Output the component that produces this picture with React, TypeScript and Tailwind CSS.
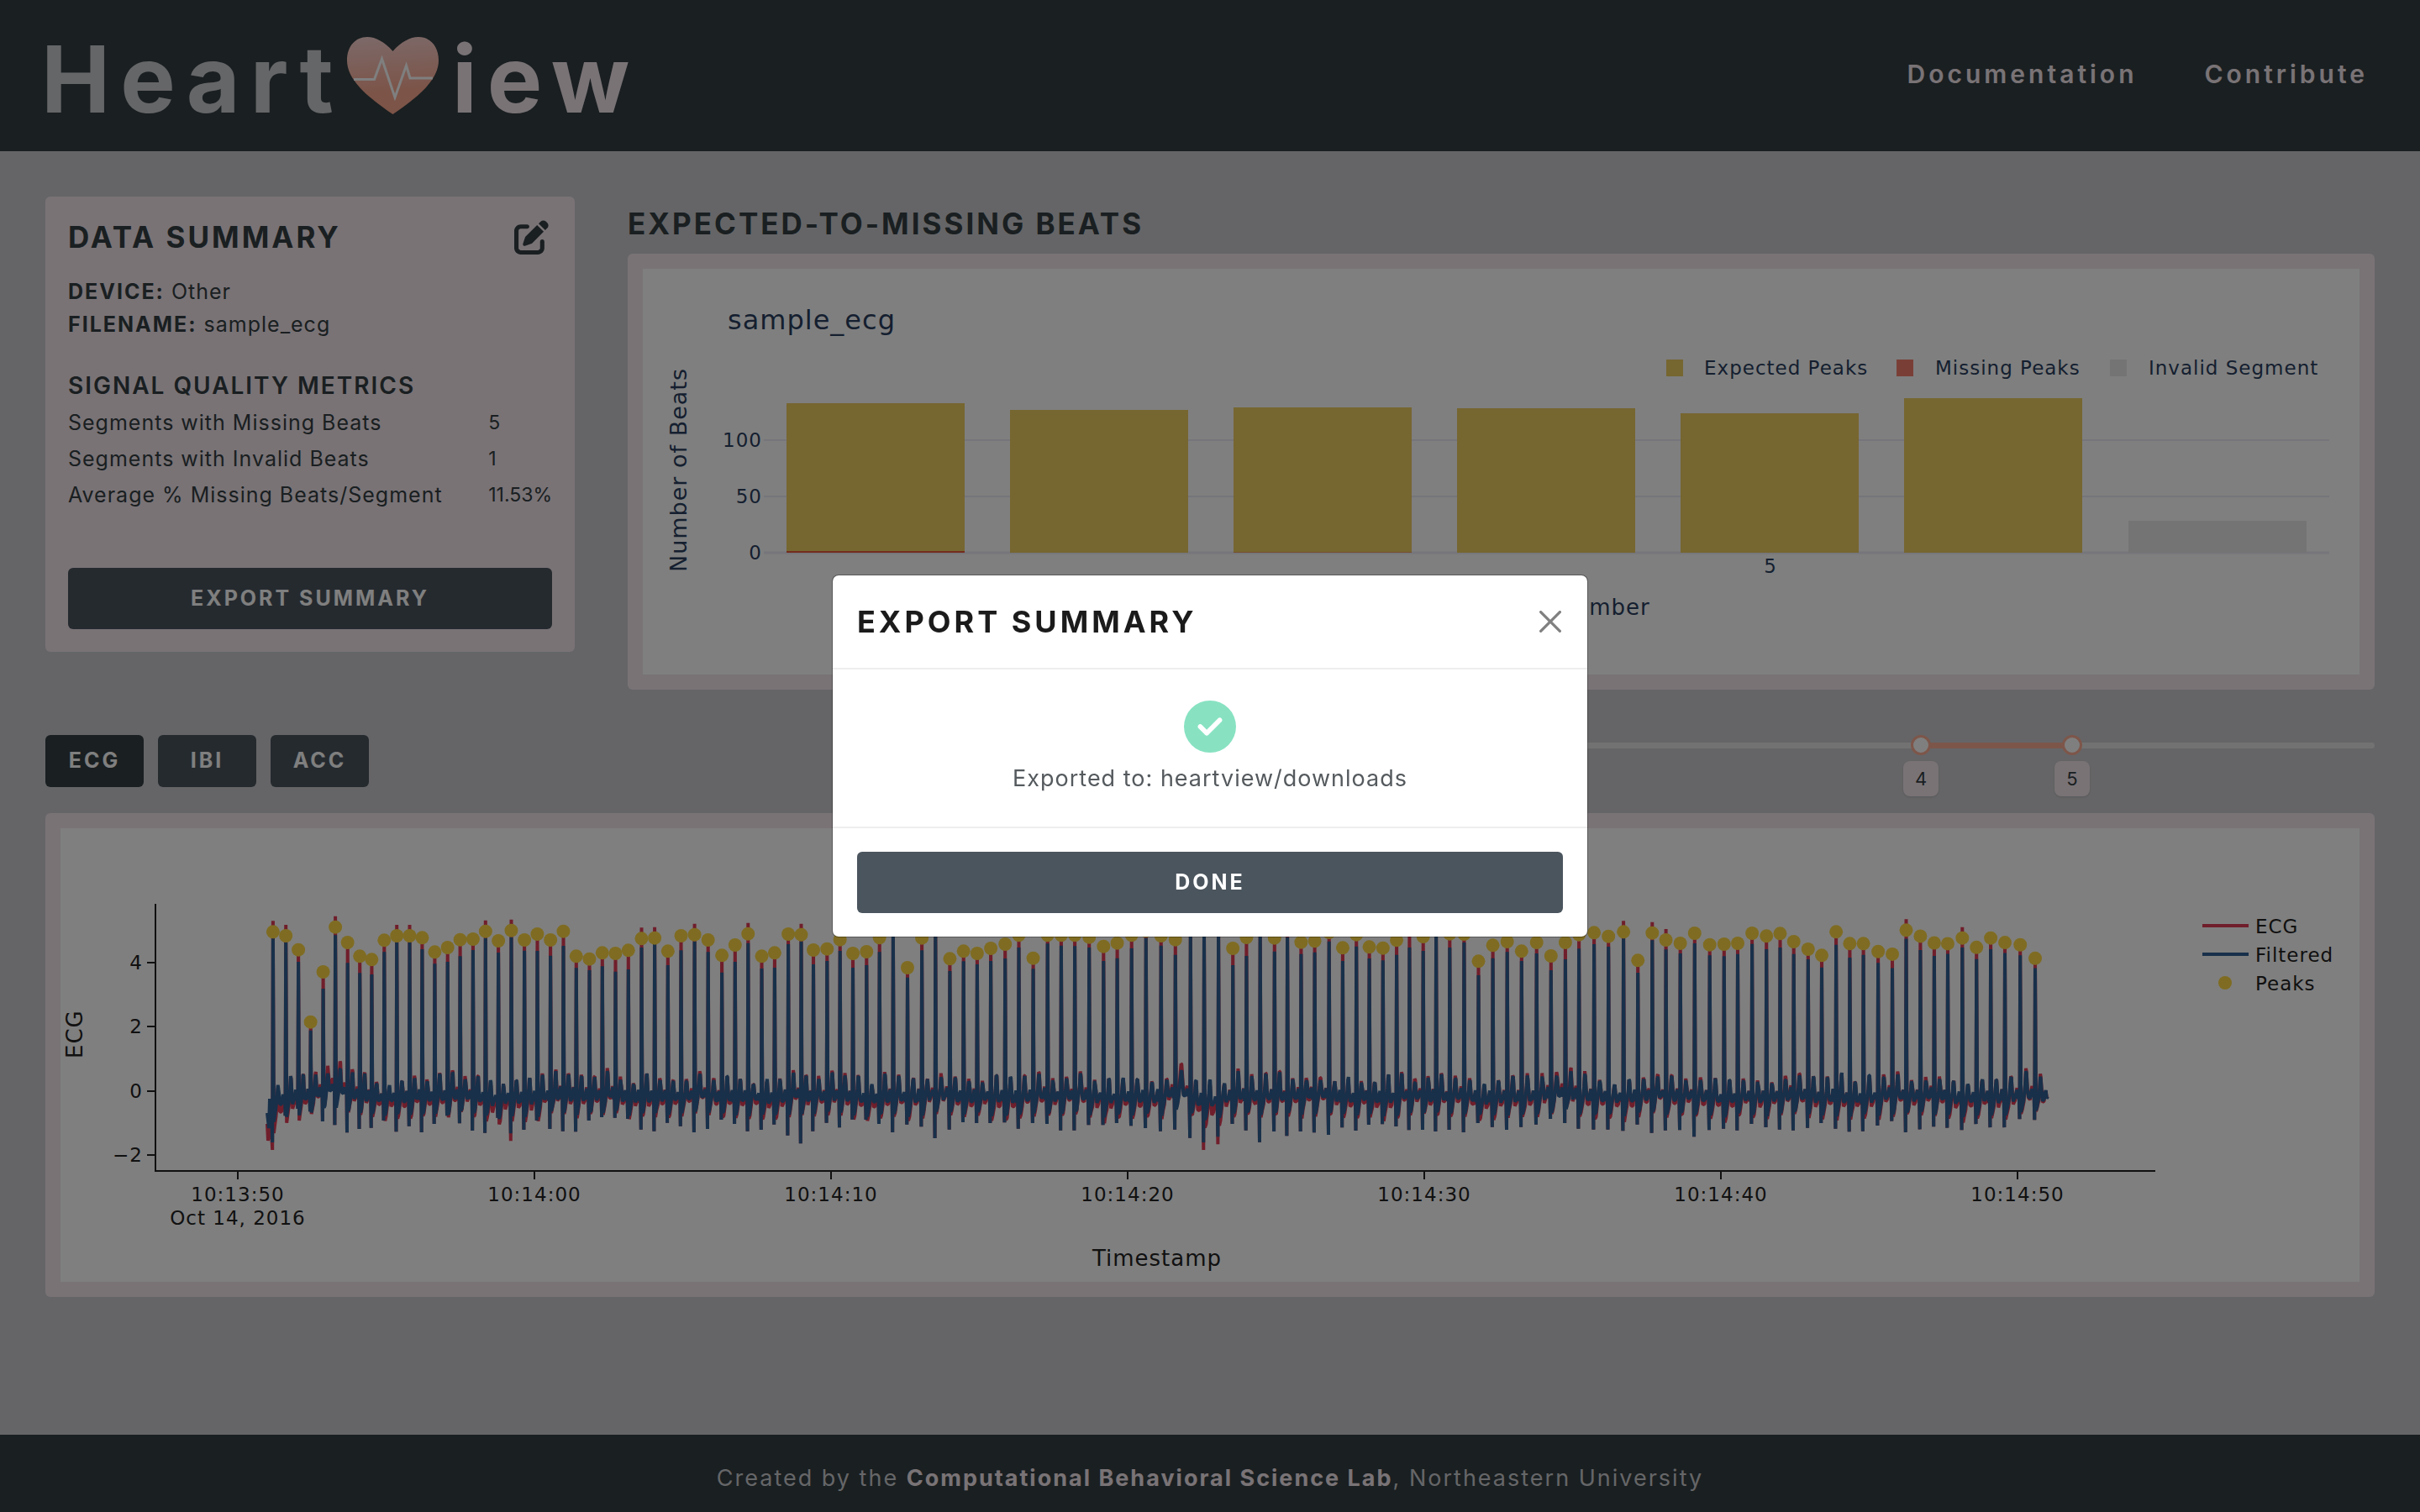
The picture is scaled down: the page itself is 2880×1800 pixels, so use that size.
import { FaCircleCheck, FaPenToSquare } from "react-icons/fa6";

/* ---------- Expected-to-missing chart ---------- */

const BAR_PITCH = 266;
const beatBars = [
  { top: 160, missing: 2 },
  { top: 168, missing: 0 },
  { top: 165, missing: 1 },
  { top: 166, missing: 0 },
  { top: 172, missing: 0 },
  { top: 154, missing: 0 },
];

const beatGrid = [
  { y: 204, label: "100" },
  { y: 271, label: "50" },
];

function BeatsChart() {
  return (
    <svg
      viewBox="0 0 2043 483"
      className="block h-auto w-full bg-white font-['DejaVu_Sans',sans-serif]"
      role="img"
      aria-label="Expected and missing beats per segment"
    >
      <g fill="#2a3f5f" fontSize="23" letterSpacing="1">
        <text x="101" y="72" fontSize="32">
          sample_ecg
        </text>
        <text x="-361" y="52" fontSize="27" transform="rotate(-90)">
          Number of Beats
        </text>
        <text x="955" y="412" fontSize="26">
          Segment Number
        </text>
        {beatGrid.map((g) => (
          <text key={g.label} x="142" y={g.y + 8} textAnchor="end">
            {g.label}
          </text>
        ))}
        <text x="142" y="346" textAnchor="end">0</text>
        <text x="1342" y="362" textAnchor="middle">5</text>
        <text x="1263" y="126">Expected Peaks</text>
        <text x="1538" y="126">Missing Peaks</text>
        <text x="1792" y="126">Invalid Segment</text>
      </g>
      <rect x="1218" y="108" width="20" height="20" fill="#eccd61" />
      <rect x="1492" y="108" width="20" height="20" fill="#f27e6c" />
      <rect x="1746" y="108" width="20" height="20" fill="#e8e8e8" />
      <g stroke="#ebeaf6">
        {beatGrid.map((g) => (
          <line key={g.label} x1="144" x2="2007" y1={g.y} y2={g.y} strokeWidth="2" />
        ))}
        <line x1="144" x2="2007" y1="338" y2="338" strokeWidth="3" />
      </g>
      {beatBars.map((bar, i) => (
        <g key={i}>
          <rect x={171 + i * BAR_PITCH} y={bar.top} width="212" height={338 - bar.top} fill="#eccd61" />
          {bar.missing > 0 && (
            <rect
              x={171 + i * BAR_PITCH}
              y={338 - bar.missing}
              width="212"
              height={bar.missing}
              fill={bar.missing > 1 ? "#e9583a" : "#eca05e"}
            />
          )}
        </g>
      ))}
      <rect x="1768" y="300" width="212" height="38" fill="#e8e8e8" />
    </svg>
  );
}

/* ---------- ECG signal ---------- */

type Beat = [x: number, dot: number, top: number, bottom: number];
type Window = { x0: number; y0: number; sx: number; sy: number; beats: Beat[] };

const windows: Window[] = [
  {
    x0: 300, y0: 1060, sx: 2.613, sy: 3,
    beats: [
      [65, 148, 172, 900], [105, 162, 186, 805], [144, 212, 255, 780], [182, 470, 500, 790], [221, 291, 351, 825],
      [259, 131, 160, 838], [297, 186, 259, 865], [335, 235, 295, 852], [372, 247, 300, 848], [411, 178, 220, 822],
      [450, 162, 186, 862], [490, 162, 186, 842], [529, 169, 210, 864], [568, 220, 262, 834], [608, 204, 255, 805],
      [647, 176, 235, 832], [687, 174, 213, 858], [726, 146, 170, 866], [766, 180, 222, 812], [806, 143, 167, 868],
      [847, 177, 215, 855], [887, 156, 216, 822], [928, 177, 233, 852], [968, 146, 198, 860], [1008, 235, 277, 862],
      [1049, 245, 285, 822], [1089, 223, 271, 810], [1130, 225, 290, 812], [1170, 214, 282, 816], [1211, 172, 204, 854],
      [1252, 170, 192, 860], [1293, 217, 267, 830], [1334, 162, 214, 842], [1376, 158, 182, 864], [1418, 177, 220, 852],
      [1461, 232, 293, 819], [1502, 195, 255, 834],
    ],
  },
  {
    x0: 880, y0: 1080, sx: 1.17, sy: 3,
    beats: [
      [12, 95, 128, 800], [31, 175, 219, 795], [49, 163, 216, 776], [68, 96, 132, 815], [86, 98, 122, 844],
      [103, 153, 204, 800], [122, 149, 192, 770], [140, 116, 156, 787], [158, 165, 216, 758], [177, 159, 207, 759],
      [195, 109, 160, 774], [214, 60, 100, 804], [234, 216, 251, 776], [254, 110, 154, 784], [273, 70, 100, 825],
      [293, 184, 228, 794], [312, 157, 193, 768], [331, 165, 204, 771], [350, 147, 192, 771], [370, 132, 183, 769],
      [389, 100, 144, 791], [409, 182, 220, 771], [429, 100, 130, 774], [448, 100, 137, 797], [467, 100, 139, 797],
      [487, 107, 144, 778], [507, 140, 192, 778], [526, 128, 182, 771], [546, 100, 147, 781], [566, 85, 110, 789],
      [587, 102, 137, 800], [607, 116, 170, 794], [628, 60, 100, 824], [647, 60, 100, 840], [667, 60, 100, 820],
      [687, 147, 207, 774], [706, 108, 174, 797], [725, 60, 100, 839], [745, 110, 158, 801], [763, 80, 108, 817],
      [782, 125, 167, 801], [801, 121, 161, 805], [821, 90, 122, 813], [840, 145, 192, 787], [859, 98, 140, 798],
      [877, 142, 183, 777], [896, 146, 190, 775], [915, 118, 170, 783], [933, 80, 144, 796], [952, 105, 156, 795],
      [970, 70, 104, 801], [989, 95, 144, 795], [1009, 96, 126, 804], [1029, 193, 243, 771], [1049, 136, 182, 785],
      [1069, 123, 160, 795], [1089, 157, 192, 785], [1110, 126, 165, 776], [1130, 174, 225, 756], [1150, 126, 186, 771],
      [1169, 98, 148, 791], [1190, 91, 132, 794], [1210, 104, 141, 794], [1231, 88, 112, 799], [1251, 190, 234, 776],
      [1271, 92, 118, 806], [1290, 117, 151, 797], [1310, 129, 165, 796], [1330, 93, 129, 820], [1351, 134, 172, 796],
      [1371, 132, 175, 791], [1390, 129, 167, 797], [1410, 93, 131, 774], [1430, 103, 150, 786], [1449, 94, 144, 794],
      [1468, 123, 167, 797], [1488, 150, 186, 788], [1507, 172, 215, 771], [1527, 88, 134, 791], [1546, 130, 180, 802],
      [1565, 130, 170, 800],
    ],
  },
  {
    x0: 2200, y0: 860, sx: 2.306, sy: 2.24,
    beats: [
      [81, 611, 641, 1075], [120, 618, 655, 1063], [158, 554, 577, 1093], [197, 570, 607, 1085], [235, 588, 623, 1078],
      [272, 590, 617, 1081], [312, 575, 600, 1087], [351, 600, 631, 1071], [390, 575, 605, 1080], [429, 587, 615, 1080],
      [471, 593, 621, 1058], [512, 629, 655, 1060],
    ],
  },
];

const beats = windows.flatMap((w) =>
  w.beats.map(([x, dot, top, bottom]) => ({
    x: w.x0 + x / w.sx,
    dot: w.y0 + dot / w.sy,
    top: w.y0 + top / w.sy,
    bottom: w.y0 + bottom / w.sy,
  })),
);

const bump = (x: number, center: number, width: number, height: number) =>
  height * Math.exp(-(((x - center) / width) ** 2));

// Slow wander of the raw signal's baseline.
const drift = (x: number) =>
  3 * Math.sin(x / 23) + 2 * Math.sin(x / 9) +
  bump(x, 322, 12, 20) + bump(x, 400, 18, -14) + bump(x, 590, 20, 5) + bump(x, 1406, 8, -12) +
  bump(x, 1440, 18, 14) + bump(x, 1480, 18, -6) + bump(x, 740, 25, -5) + bump(x, 1868, 16, -7);

const noise = (i: number, k: number) => {
  const v = Math.sin(i * 12.9898 + k * 78.233) * 43758.5453;
  return v - Math.floor(v) - 0.5;
};

function tracePath(raw: boolean) {
  const pts: [number, number][] = raw
    ? [[318, 1338], [319, 1358], [321, 1346], [322, 1328]]
    : [[318, 1325], [320, 1343], [321, 1308], [323, 1322]];
  beats.forEach((b, i) => {
    const next = beats[i + 1] ? beats[i + 1].x : b.x + 16;
    const gap = next - b.x;
    const n = (k: number) => noise(i, k);
    const y = (x: number, value: number, k: number) =>
      value + drift(x) * (raw ? 1 : 0.55) + n(k) * 5 + (raw ? n(k + 20) * 3 : 0);
    const sag = raw ? 4 : 0;
    const tWave = n(50) * 12;
    const spread = b.dot < 1125 && b.top - b.dot < 12 ? 9 : -2;
    const bottomExtra = raw && [0, 19, 70, 71].includes(i) ? 9 : 0;
    pts.push([b.x - 0.7, b.bottom + bottomExtra]);
    pts.push([b.x, raw ? b.dot - spread - 4 : b.top]);
    pts.push([b.x + 1, y(b.x, 1326 + sag, 1)]);
    const shape: [number, number][] = [
      [0.14, 1321 + sag], [0.24, 1310 + sag], [0.33, 1296 + tWave / 2], [0.38, 1284 + tWave - sag / 2],
      [0.42, 1284 + tWave], [0.48, 1299], [0.54, 1310 + sag], [0.66, 1308 + sag],
      [0.72, 1304], [0.79, 1298], [0.86, 1309], [0.92, 1305],
    ];
    shape.forEach(([t, v], k) => {
      const x = b.x + gap * t;
      pts.push([x, y(x, v, k + 2)]);
    });
  });
  return pts.map(([x, y], i) => `${i ? "L" : "M"}${x.toFixed(1)} ${y.toFixed(1)}`).join("");
}

const rawTrace = tracePath(true);
const filteredTrace = tracePath(false);

const yTicks = [
  { y: 1146, label: "4" },
  { y: 1222, label: "2" },
  { y: 1299, label: "0" },
  { y: 1375, label: "−2" },
];
const xTicks = ["10:13:50", "10:14:00", "10:14:10", "10:14:20", "10:14:30", "10:14:40", "10:14:50"];

function EcgChart() {
  return (
    <svg
      viewBox="72 986 2736 540"
      className="block h-auto w-full bg-white font-['DejaVu_Sans',sans-serif]"
      role="img"
      aria-label="ECG signal with detected peaks"
    >
      <g fill="none" strokeLinejoin="bevel">
        <path d={rawTrace} stroke="#e03c56" strokeWidth="4" />
        <path d={filteredTrace} stroke="#306094" strokeWidth="4" />
        <path d="M2621 1102H2676" stroke="#e03c56" strokeWidth="4" />
        <path d="M2621 1136H2676" stroke="#306094" strokeWidth="4" />
      </g>
      <g fill="#fed844">
        {beats.map((b, i) => (
          <circle key={i} cx={b.x} cy={b.dot} r="8" />
        ))}
        <circle cx="2648" cy="1170" r="8" />
      </g>
      <g stroke="#222222" strokeWidth="2">
        <path d="M185 1076V1394" />
        <path d="M184 1394H2565" />
        {yTicks.map((t) => (
          <path key={t.label} d={`M175 ${t.y}h9`} />
        ))}
        {xTicks.map((t, i) => (
          <path key={t} d={`M${283 + i * 353} 1394v10`} />
        ))}
      </g>
      <g fill="#222222" fontSize="23" letterSpacing="1">
        {yTicks.map((t) => (
          <text key={t.label} x="170" y={t.y + 8} textAnchor="end">
            {t.label}
          </text>
        ))}
        {xTicks.map((t, i) => (
          <text key={t} x={283 + i * 353} y="1430" textAnchor="middle">
            {t}
          </text>
        ))}
        <text x="283" y="1458" textAnchor="middle">Oct 14, 2016</text>
        <text x="2684" y="1111">ECG</text>
        <text x="2684" y="1145">Filtered</text>
        <text x="2684" y="1179">Peaks</text>
        <text x="1377" y="1507" textAnchor="middle" fontSize="26">Timestamp</text>
        <text x="-1260" y="98" fontSize="26" transform="rotate(-90)">ECG</text>
      </g>
    </svg>
  );
}

/* ---------- Page parts ---------- */

function HeartLogo() {
  return (
    <svg viewBox="0 0 109 92" className="mr-4 ml-1 h-[92px] w-[109px]" aria-hidden="true">
      <defs>
        <linearGradient id="heart" x1="0" y1="0" x2="0.1" y2="1">
          <stop offset="0" stopColor="#f8d4d4" />
          <stop offset="0.75" stopColor="#f8a890" />
          <stop offset="1" stopColor="#f8a890" />
        </linearGradient>
      </defs>
      <path
        d="M54.5 17C45 6 34 0 24 0C10 0 0 11 0 28C0 50 22 70 54.500 92C87 70 109 50 109 28C109 11 99 0 85 0C75 0 64 6 54.500 17Z"
        fill="url(#heart)"
      />
      <path d="M8 50.500H32.500L41.500 26L57 72L70.500 34L75 49H102" fill="none" stroke="#ffffff" strokeWidth="3" />
    </svg>
  );
}

function Header() {
  return (
    <header className="flex h-[180px] items-center justify-between bg-[#343e42] pr-[62px] pl-[49px]">
      <h1 className="flex items-center text-[110px] leading-none font-bold tracking-[12px]" aria-label="HeartView">
        <span className="pt-2 text-[#cbccd0]">Heart</span>
        <HeartLogo />
        <span className="pt-2 text-[#f2e6ec]">iew</span>
      </h1>
      <nav className="flex gap-[80px] pb-1 text-[30px] font-semibold tracking-[4px] text-[#f2e6ec]">
        <a href="#documentation">Documentation</a>
        <a href="#contribute">Contribute</a>
      </nav>
    </header>
  );
}

const metrics = [
  ["Segments with Missing Beats", "5"],
  ["Segments with Invalid Beats", "1"],
  ["Average % Missing Beats/Segment", "11.53%"],
];

function DataSummary() {
  return (
    <section className="flex h-[542px] w-[630px] shrink-0 flex-col rounded-md bg-[#f2e6ec] px-[27px] pt-6 pb-[27px] text-[25px] text-[#343e42]">
      <div className="flex items-center justify-between">
        <h2 className="text-[35px] leading-[48px] font-bold tracking-[3px]">DATA SUMMARY</h2>
        <button type="button" aria-label="Edit data" className="mr-1">
          <FaPenToSquare className="size-[41px]" />
        </button>
      </div>
      <dl className="mt-[22px] leading-[39px] tracking-[1px]">
        <div className="flex gap-2">
          <dt className="font-bold tracking-[2px]">DEVICE:</dt>
          <dd>Other</dd>
        </div>
        <div className="flex gap-2">
          <dt className="font-bold tracking-[2px]">FILENAME:</dt>
          <dd>sample_ecg</dd>
        </div>
      </dl>
      <h3 className="mt-[30px] text-[28px] leading-[46px] font-semibold tracking-[2px]">SIGNAL QUALITY METRICS</h3>
      <table className="w-full tracking-[1px]">
        <tbody>
          {metrics.map(([name, value]) => (
            <tr key={name} className="h-[43px]">
              <th scope="row" className="text-left font-normal">{name}</th>
              <td className="w-[75px] text-[23px] tracking-normal">{value}</td>
            </tr>
          ))}
        </tbody>
      </table>
      <button
        type="button"
        className="mt-auto h-[73px] w-full rounded-md bg-[#4b555e] text-[25px] font-bold tracking-[3px] text-white"
      >
        EXPORT SUMMARY
      </button>
    </section>
  );
}

const signalTabs = ["ECG", "IBI", "ACC"];

const SEGMENTS = 7;
const selected = [4, 5];
const percent = (v: number) => `${((v - 1) / (SEGMENTS - 1)) * 100}%`;

function SegmentSlider() {
  return (
    <div className="relative h-6 w-[1080px]">
      <div className="absolute inset-x-0 top-[9px] h-[7px] rounded-full bg-[#e4e4e4]" />
      <div
        className="absolute top-[9px] h-[7px] bg-[#faac94]"
        style={{ left: percent(selected[0]), right: `calc(100% - ${percent(selected[1])})` }}
      />
      {selected.map((v, i) => (
        <div key={v}>
          <input
            type="range"
            min={1}
            max={SEGMENTS}
            defaultValue={v}
            aria-label={i === 0 ? "First segment" : "Last segment"}
            className="pointer-events-none absolute top-0 -left-3 h-6 w-[calc(100%+24px)] appearance-none bg-transparent [&::-webkit-slider-thumb]:pointer-events-auto [&::-webkit-slider-thumb]:size-6 [&::-webkit-slider-thumb]:appearance-none [&::-webkit-slider-thumb]:rounded-full [&::-webkit-slider-thumb]:border-[3px] [&::-webkit-slider-thumb]:border-solid [&::-webkit-slider-thumb]:border-[#faac94] [&::-webkit-slider-thumb]:bg-white"
          />
          <output
            className="absolute top-[31px] flex size-[42px] -translate-x-1/2 items-center justify-center rounded-lg bg-[#f2e6ec] text-[22px] text-[#343e42] shadow"
            style={{ left: percent(v) }}
          >
            {v}
          </output>
        </div>
      ))}
    </div>
  );
}

function ExportDialog() {
  return (
    <div className="fixed inset-0 flex items-center justify-center bg-black/50">
      <div
        role="dialog"
        aria-modal="true"
        aria-labelledby="export-title"
        className="w-[900px] rounded-lg border border-black/30 bg-white bg-clip-padding"
      >
        <div className="flex h-[112px] items-center justify-between border-b-2 border-[#eeeeee] px-[29px]">
          <h2 id="export-title" className="text-[36px] leading-none font-bold tracking-[4px] text-[#1b1b1b]">
            EXPORT SUMMARY
          </h2>
          <button type="button" aria-label="Close" className="mr-0.5 text-[#808080]">
            <svg viewBox="0 0 16 16" className="size-[26px]" fill="currentColor" aria-hidden="true">
              <path d="M.293.293a1 1 0 0 1 1.414 0L8 6.586 14.293.293a1 1 0 1 1 1.414 1.414L9.414 8l6.293 6.293a1 1 0 0 1-1.414 1.414L8 9.414l-6.293 6.293a1 1 0 0 1-1.414-1.414L6.586 8 .293 1.707a1 1 0 0 1 0-1.414z" />
            </svg>
          </button>
        </div>
        <div className="flex h-[187px] flex-col items-center pt-[37px]">
          <FaCircleCheck className="size-[62px] text-[#88e2c2]" />
          <p className="mt-3 text-[27px] leading-[38px] tracking-[1px] text-[#555a5e]">
            Exported to: heartview/downloads
          </p>
        </div>
        <div className="border-t-2 border-[#eeeeee] px-[29px] py-7">
          <button
            type="button"
            className="h-[73px] w-full rounded-md bg-[#4b555e] text-[25px] font-bold tracking-[3px] text-white"
          >
            DONE
          </button>
        </div>
      </div>
    </div>
  );
}

export default function App() {
  return (
    <div className="flex min-h-screen flex-col bg-[#cbcbce] font-['Inter',sans-serif]">
      <Header />
      <main className="flex-1 px-[54px] pt-[54px]">
        <div className="flex items-start gap-[63px]">
          <DataSummary />
          <section className="min-w-0 flex-1">
            <h2 className="mb-1 text-[35px] leading-[64px] font-bold tracking-[3px] text-[#343e42]">
              EXPECTED-TO-MISSING BEATS
            </h2>
            <div className="rounded-md bg-[#f2e6ec] p-[18px]">
              <BeatsChart />
            </div>
          </section>
        </div>
        <div className="mt-[54px] flex items-start justify-between">
          <div className="flex gap-[17px]">
            {signalTabs.map((tab, i) => (
              <button
                key={tab}
                type="button"
                aria-pressed={i === 0}
                className={`h-[62px] w-[117px] rounded-md text-[25px] font-bold tracking-[3px] text-white ${
                  i === 0 ? "bg-[#343e42]" : "bg-[#4b555e]"
                }`}
              >
                {tab}
              </button>
            ))}
          </div>
          <SegmentSlider />
        </div>
        <section className="mt-[31px] rounded-md bg-[#f2e6ec] p-[18px]">
          <EcgChart />
        </section>
      </main>
      <footer className="flex h-[92px] items-center justify-center bg-[#343e42] pt-3 text-[27px] tracking-[2px] text-[#cbccd0]">
        <p>
          Created by the <strong className="font-bold text-[#f2e6ec]">Computational Behavioral Science Lab</strong>,
          Northeastern University
        </p>
      </footer>
      <ExportDialog />
    </div>
  );
}
